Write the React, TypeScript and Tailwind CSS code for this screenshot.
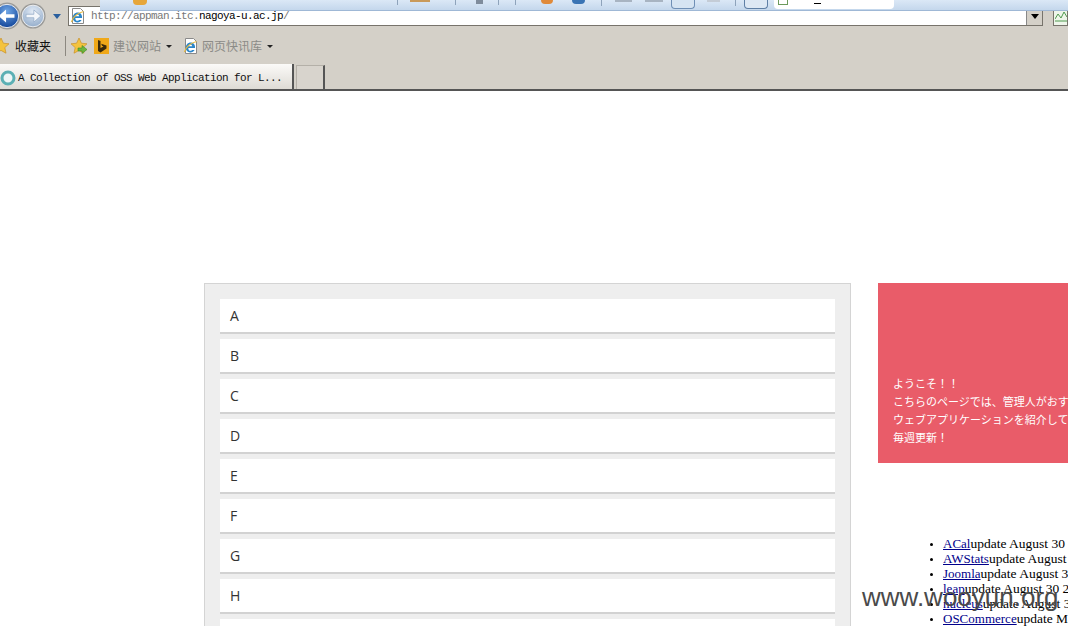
import * as React from "react";

const letters = ["A", "B", "C", "D", "E", "F", "G", "H", "I"];

const updates = [
  { name: "ACal", text: "update August 30 2013" },
  { name: "AWStats", text: "update August 30 2013" },
  { name: "Joomla", text: "update August 30 2013" },
  { name: "leap", text: "update August 30 2013" },
  { name: "nucleus", text: "update August 30 2013" },
  { name: "OSCommerce", text: "update May 30 2013" },
];

function NavButton({ size, light }: { size: number; light?: boolean }) {
  const id = light ? "navLight" : "navBlue";
  return (
    <svg width={size} height={size} viewBox="0 0 30 30" className="shrink-0">
      <defs>
        <radialGradient id={id} cx="50%" cy="30%" r="75%">
          <stop offset="0%" stopColor={light ? "#e4ecf6" : "#6fa6e6"} />
          <stop offset="100%" stopColor={light ? "#8fa9c8" : "#0c3f94"} />
        </radialGradient>
      </defs>
      <circle cx="15" cy="15" r="14.5" fill="#9a9a98" />
      <circle cx="15" cy="15" r="12.5" fill={`url(#${id})`} stroke="#f4f4f4" strokeWidth="1" />
      {light ? (
        <path d="M7 13h9V8l8 7-8 7v-5H7z" fill="#f3f6fa" stroke="#8ea6c4" strokeWidth="0.8" />
      ) : (
        <path d="M23 13h-9V8l-8 7 8 7v-5h9z" fill="#ffffff" />
      )}
    </svg>
  );
}

function IeIcon() {
  return (
    <svg width="16" height="16" viewBox="0 0 16 16" className="shrink-0">
      <path d="M2.500 .5h8l3 3v12h-11z" fill="#fff" stroke="#8a8a8a" />
      <path
        d="M12 10c.4-3.300-1.700-5.500-4.300-5.500-2.800 0-4.800 2.200-4.900 5-.1 2.900 1.800 4.900 4.500 4.900 2 0 3.500-.9 4.300-2.500H9c-.4.600-1 .9-1.700.9-1.100 0-1.900-.8-2-2.800zM5.300 8.200c.2-1.200 1-1.800 2-1.800s1.800.6 1.900 1.800z"
        fill="#2c86c9"
      />
      <path d="M1.500 14C2.500 9.500 7 5 13.500 3.500" fill="none" stroke="#e8b93c" strokeWidth="1.200" />
    </svg>
  );
}

function Star({ arrow }: { arrow?: boolean }) {
  return (
    <svg width="18" height="18" viewBox="0 0 18 18" className="shrink-0">
      <path
        d="M9 1l2.400 5.200 5.600.6-4.200 3.800 1.200 5.600L9 13.400 4 16.200l1.200-5.600L1 6.800l5.600-.6z"
        fill="#f4c33e"
        stroke="#c8912a"
        strokeWidth="0.7"
      />
      {arrow && <path d="M8 11h4V8.500l5 4-5 4V14H8z" fill="#6cb53c" stroke="#3f8a24" strokeWidth="0.6" />}
    </svg>
  );
}

function Caret() {
  return <span className="ml-[5px] h-0 w-0 border-x-[3px] border-t-[3px] border-x-transparent border-t-[#222]" />;
}

function BrowserChrome() {
  return (
    <header className="relative h-[91px] shrink-0 border-b-2 border-[#555] bg-[#d4d0c8]">
      {/* address row */}
      <div className="flex h-[28px] items-start">
        <div className="ml-[-7px] mt-[2px] flex items-center">
          <NavButton size={28} />
          <div className="ml-[-1px]">
            <NavButton size={26} light />
          </div>
          <span className="ml-[7px] h-0 w-0 border-x-[4px] border-t-[5px] border-x-transparent border-t-[#2a5f9e]" />
        </div>
        <div className="ml-[7px] mt-[6px] flex h-[20px] w-[978px] items-center border border-[#77736b] bg-white">
          <div className="ml-[1px]">
            <IeIcon />
          </div>
          <span className="ml-[5px] text-[11px] tracking-[-0.6px] text-[#777] [font-family:'Liberation_Mono',monospace]">
            http://appman.itc.<span className="text-black">nagoya-u.ac.jp</span>/
          </span>
          <div className="ml-auto flex h-[18px] w-[16px] items-center justify-center border-l border-[#888] bg-[#d4d0c8]">
            <span className="h-0 w-0 border-x-[4px] border-t-[5px] border-x-transparent border-t-black" />
          </div>
        </div>
        <div className="ml-[10px] mt-[6px] flex h-[20px] flex-1 items-center border border-[#77736b] bg-[#eef5ea] pl-[1px]">
          <svg width="12" height="12" viewBox="0 0 12 12">
            <path d="M0 9l3-5 3 4 3-6 3 5" fill="none" stroke="#4f9a4f" />
            <path d="M0 11h12" stroke="#4f9a4f" />
          </svg>
        </div>
      </div>

      {/* favorites row */}
      <div className="flex h-[36px] items-center text-[12px] [font-family:'Noto_Sans_CJK_SC','Liberation_Sans',sans-serif]">
        <div className="ml-[-8px]">
          <Star />
        </div>
        <span className="ml-[5px] text-[#111]">收藏夹</span>
        <span className="ml-[14px] h-[20px] w-px bg-[#8c8880]" />
        <div className="ml-[4px]">
          <Star arrow />
        </div>
        <div className="ml-[6px] flex h-[16px] w-[15px] items-center justify-center bg-[#f0a818]">
          <svg width="10" height="13" viewBox="0 0 10 13">
            <path d="M1 0l2.500 1v7l3-1.500-1.500-.7-.8-2L9.500 5.500v3L3.500 12.500 1 11z" fill="#3a2a0c" />
          </svg>
        </div>
        <span className="ml-[4px] text-[#8b8b87]">建议网站</span>
        <Caret />
        <div className="ml-[11px]">
          <IeIcon />
        </div>
        <span className="ml-[3px] text-[#8b8b87]">网页快讯库</span>
        <Caret />
      </div>

      {/* tabs row */}
      <div className="flex h-[25px] items-stretch">
        <div className="flex w-[294px] items-center border-r-2 border-[#555] bg-gradient-to-b from-[#fbfaf8] to-[#dedbd5] pt-[3px]">
          <svg width="16" height="16" viewBox="0 0 16 16" className="shrink-0">
            <circle cx="8" cy="8" r="6" fill="#eef6f6" stroke="#5cb0b4" strokeWidth="3" />
          </svg>
          <span className="ml-[2px] whitespace-nowrap text-[11px] tracking-[-0.6px] text-[#111] [font-family:'Liberation_Mono',monospace]">
            A Collection of OSS Web Application for L...
          </span>
        </div>
        <div className="ml-[2px] mt-[1px] w-[29px] border-r-2 border-t border-l border-[#b4b0a8] border-r-[#555] bg-[#d8d4cd]" />
      </div>

      {/* other window peeking over the top edge */}
      <div className="absolute left-[100px] right-0 top-0 flex h-[11px] items-start border-b border-[#9fb8d6] bg-gradient-to-b from-[#dbe8f6] to-[#c4d7ec]">
        <span className="ml-[33px] h-[5px] w-[14px] rounded-b bg-[#e6a63a]" />
        <span className="ml-[250px] h-[5px] w-px bg-[#8ea3bb]" />
        <span className="ml-[12px] h-[2px] w-[20px] bg-[#c99a5a]" />
        <span className="ml-[25px] h-[5px] w-px bg-[#8ea3bb]" />
        <span className="ml-[20px] h-[4px] w-[7px] bg-[#7f8c9c]" />
        <span className="ml-[15px] h-[5px] w-px bg-[#8ea3bb]" />
        <span className="ml-[16px] h-[5px] w-px bg-[#8ea3bb]" />
        <span className="ml-[25px] h-[4px] w-[12px] rounded-b bg-[#e08a3a]" />
        <span className="ml-[19px] h-[4px] w-[13px] rounded-b bg-[#3a74b4]" />
        <span className="ml-[16px] h-[6px] w-px bg-[#8ea3bb]" />
        <span className="ml-[13px] h-[2px] w-[17px] bg-[#a8b4c2]" />
        <span className="ml-[13px] h-[2px] w-[18px] bg-[#a8b4c2]" />
        <span className="ml-[8px] h-[9px] w-[24px] rounded-b border border-t-0 border-[#6f8fb5] bg-[#d6e4f2]" />
        <span className="ml-[12px] h-[2px] w-[13px] bg-[#c4ccd6]" />
        <span className="ml-[15px] h-[6px] w-px bg-[#8ea3bb]" />
        <span className="ml-[8px] h-[9px] w-[24px] rounded-b border border-t-0 border-[#5f7fa5] bg-[#dde8f4]" />
        <div className="ml-[6px] flex h-[9px] w-[120px] items-start rounded-b-sm bg-white pl-[4px]">
          <span className="h-[5px] w-[10px] border-x border-b border-[#6c9a5c]" />
          <span className="ml-[26px] mt-[3px] h-px w-[7px] bg-black" />
        </div>
      </div>
    </header>
  );
}

export default function App() {
  return (
    <div className="relative flex h-[626px] w-[1068px] flex-col overflow-hidden bg-white">
      <BrowserChrome />

      <main className="flex min-h-0 flex-1 items-start pl-[204px] pt-[192px]">
        <section className="w-[647px] shrink-0 border border-[#d4d4d4] bg-[#eeeeee] p-[15px]">
          <ul className="flex flex-col gap-[5px]">
            {letters.map((letter) => (
              <li
                key={letter}
                className="flex h-[35px] items-center border-b-2 border-[#d2d2d2] bg-white pl-[10px] text-[14px] text-[#333] [font-family:'Open_Sans','Noto_Sans',sans-serif]"
              >
                {letter}
              </li>
            ))}
          </ul>
        </section>

        <aside className="ml-[27px] w-[400px] shrink-0">
          <div className="flex h-[180px] flex-col justify-end bg-[#e95c69] pb-[17px] pl-[15px] text-[11px] leading-[18px] text-white [font-family:'Noto_Sans_CJK_JP',sans-serif]">
            <p>ようこそ！！</p>
            <p className="whitespace-nowrap">こちらのページでは、管理人がおすすめする</p>
            <p className="whitespace-nowrap">ウェブアプリケーションを紹介しています。</p>
            <p>毎週更新！</p>
          </div>
          <ul className="mt-[73px] list-disc whitespace-nowrap pl-[65px] text-[13.5px] leading-[15px] text-black marker:text-[10px] [font-family:'Liberation_Serif',serif]">
            {updates.map((item) => (
              <li key={item.name}>
                <a href="#" className="text-[13px] text-[#00008b] underline">
                  {item.name}
                </a>
                {item.text}
              </li>
            ))}
          </ul>
        </aside>
      </main>

      {/* site watermark over the page */}
      <span className="absolute left-[862px] top-[583px] whitespace-nowrap text-[26px] leading-[28px] text-[#4a4a4a] [font-family:'Liberation_Sans',sans-serif]">
        www.wooyun.org
      </span>
    </div>
  );
}
